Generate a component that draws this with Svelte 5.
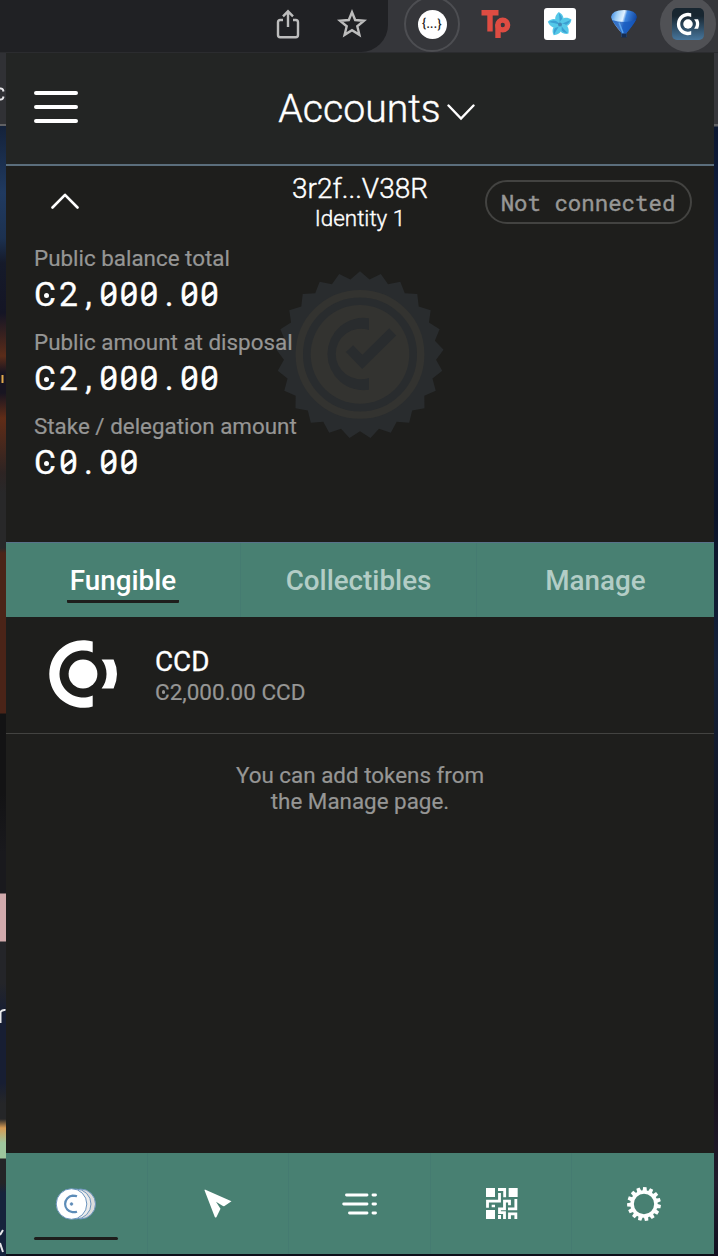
<script>
  const balances = [
    { label: 'Public balance total', value: '2,000.00' },
    { label: 'Public amount at disposal', value: '2,000.00' },
    { label: 'Stake / delegation amount', value: '0.00' },
  ];
  const tabs = ['Fungible', 'Collectibles', 'Manage'];
  const kind = (c) => (c === '0' ? 'digit zero' : 'digit');

  const star = (points, outer, inner) =>
    Array.from({ length: points * 2 }, (_, i) => {
      const a = (Math.PI * i) / points;
      const r = i % 2 ? inner : outer;
      return `${(r * Math.sin(a)).toFixed(2)},${(-r * Math.cos(a)).toFixed(2)}`;
    }).join(' ');
  const seal = star(25, 83.7, 76.2);
  const teeth = Array.from({ length: 15 }, (_, i) => i * 24 + 3);
  const petals = [0, 72, 144, 216, 288];
</script>

{#snippet mark()}
  <path d="M9.7-32.4A33.8 33.8 0 1 0 9.7 32.4V21.4A23.5 23.5 0 1 1 9.7-21.4Z" />
  <path d="M18.6-14.4H30.6A33.8 33.8 0 0 1 30.6 14.4H18.6A23.5 23.5 0 0 0 18.6-14.4Z" />
  <circle r="14.4" />
{/snippet}

<div class="screen">
  <div class="toolbar">
    <div class="omnibox">
      <svg width="26" height="32" viewBox="0 0 26 32" fill="none" stroke="#bdbdbd" stroke-width="2.4">
        <path d="M8 12H5.2Q3 12 3 14.2V27Q3 29.2 5.200 29.200H20.800Q23 29.200 23 27V14.200Q23 12 20.800 12H18M13 19V4M8 8.300L13 3.300L18 8.300" />
      </svg>
      <svg width="32" height="32" viewBox="0 0 32 32" fill="none" stroke="#bdbdbd" stroke-width="2.4">
        <path d="M16 4.200L19.200 12L28 12.700L21.300 18.300L23.400 26.800L16 22.200L8.600 26.800L10.700 18.300L4 12.700L12.800 12Z" />
      </svg>
    </div>
    <div class="extensions">
      <div class="ext ring"><span>{'{...}'}</span></div>
      <div class="ext">
        <svg width="32" height="32" viewBox="0 0 32 32" fill="none" stroke="#de4c42" stroke-width="5.4">
          <path d="M1.500 4.700H18.500M10 4.700V23.500M18 30V16.500" /><circle cx="22.700" cy="17" r="4.900" />
        </svg>
      </div>
      <div class="ext">
        <svg width="32" height="32" viewBox="0 0 32 32">
          <rect width="32" height="32" rx="3" fill="#fff" />
          <g transform="translate(16 16.500) rotate(-8)">
            {#each petals as angle}
              <path transform="rotate({angle})" d="M0 1C-6-3-5-9 .5-12.500C5.500-9 6-3 0 1Z" fill="#55c8e8" />
              <path transform="rotate({angle})" d="M0 0C0-3 .5-7 .5-11.500C3.500-8 4-4 0 0Z" fill="#3ba0d3" />
            {/each}
            <circle r="2" fill="#4389b8" />
          </g>
        </svg>
      </div>
      <div class="ext">
        <svg width="32" height="32" viewBox="0 0 32 32">
          <defs>
            <linearGradient id="balloon" x2="1" y2=".3"><stop stop-color="#2f7fe0" /><stop offset=".25" stop-color="#9accf5" /><stop offset=".5" stop-color="#e2f2ff" /><stop offset=".6" stop-color="#3f87e0" /><stop offset="1" stop-color="#0e429c" /></linearGradient>
          </defs>
          <path d="M3 9Q4 2 16 2Q28 2 29 9Q28 14 18.500 25V29H13.500V25Q4 14 3 9Z" fill="url(#balloon)" />
          <path d="M4 12Q16 16 28 12Q25 17 18.500 25H13.500Q7 17 4 12Z" fill="#1759bd" opacity=".8" />
          <path d="M11 14.500L15 25" stroke="#5aa5ee" stroke-width="1.500" />
          <path d="M13.500 25.500H18.500V29.500H13.500Z" fill="#152c50" />
        </svg>
      </div>
      <div class="ext active">
        <svg width="32" height="32" viewBox="0 0 32 32">
          <defs><linearGradient id="app-tile" x2="0" y2="1"><stop offset=".25" stop-color="#182630" /><stop offset="1" stop-color="#47769c" /></linearGradient></defs>
          <rect width="32" height="32" rx="5" fill="url(#app-tile)" />
          <g transform="translate(16 16) scale(.33)" fill="#fff">{@render mark()}</g>
        </svg>
      </div>
    </div>
  </div>

  <div class="content">
    <div class="backdrop left">
      <svg width="6" height="1203" viewBox="0 0 6 1203" fill="none" stroke="#e8e8ea" stroke-width="2">
        <path d="M0 35.500Q3 35 3.500 38.500M0 46.500Q3 47 3.500 43.500M.5 970V959Q2 956.500 5.500 957M0 1182L3 1177M0 1190L3 1199" />
        <path d="M2.500 322V330" stroke="#e0a94c" />
      </svg>
    </div>
    <main class="popup">
      <header>
        <svg class="menu" width="44" height="34" viewBox="0 0 44 34" stroke="#fff" stroke-width="4" stroke-linecap="round"><path d="M2 3H42M2 17H42M2 31H42" /></svg>
        <h1>Accounts
          <svg width="28" height="17" viewBox="0 0 28 17" fill="none" stroke="#fff" stroke-width="2.400" stroke-linecap="round"><path d="M1.500 1.500L14 14.500L26.500 1.500" /></svg>
        </h1>
      </header>

      <section class="account">
        <svg class="seal" width="168" height="168" viewBox="-84 -84 168 168">
          <polygon points={seal} fill="#292c2e" />
          <g transform="translate(0 -.6)">
            <circle r="60.700" fill="none" stroke="#333330" stroke-width="7.400" />
            <circle r="49.300" fill="#333330" />
            <path d="M9-36.200A36.200 36.200 0 1 0 9 35.400V23.600A25.300 25.300 0 1 1 9-24.400Z" fill="#292c2e" />
            <path d="M-10.500-5.800L2.300 7.500L32.700-22.500" fill="none" stroke="#292c2e" stroke-width="10" stroke-linejoin="miter" />
          </g>
        </svg>
        <div class="summary">
          <svg class="collapse" width="28" height="18" viewBox="0 0 28 18" fill="none" stroke="#fff" stroke-width="2.600" stroke-linecap="round" stroke-linejoin="round"><path d="M1.500 15.500L14 2.800L26.500 15.500" /></svg>
          <div class="identity">
            <div class="address">3r2f...V38R</div>
            <div class="name">Identity 1</div>
          </div>
          <div class="status">Not connected</div>
        </div>
        <div class="balances">
          {#each balances as b}
            <div class="label">{b.label}</div>
            <div class="amount"><span class="ccd">C</span>{#each b.value as c}<span class={kind(c)}>{c}</span>{/each}</div>
          {/each}
        </div>
      </section>

      <nav class="tabs">
        {#each tabs as tab, i}
          <div class="tab" class:selected={i === 0}><span>{tab}</span></div>
        {/each}
      </nav>

      <div class="token">
        <svg width="70" height="70" viewBox="-35 -35 70 70" fill="#fff">{@render mark()}</svg>
        <div class="token-text">
          <div class="symbol">CCD</div>
          <div class="holding"><span class="ccd">C</span>2,000.00 CCD</div>
        </div>
      </div>
      <p>You can add tokens from<br />the Manage page.</p>

      <footer>
        <div class="item current">
          <svg width="42" height="32" viewBox="0 0 42 32" stroke="#6b94bd" stroke-width="1">
            <circle cx="25.500" cy="16" r="15" fill="#dcdcdc" /><circle cx="21" cy="16" r="15" fill="#ededed" /><circle cx="16.500" cy="16" r="15.300" fill="#fff" />
            <path d="M22 8.200Q20.500 7.700 17.500 7.700A8.300 8.300 0 0 0 17.500 24.200Q20.500 24.200 22 23.700" fill="none" stroke="#5c8cb8" stroke-width="2.200" />
            <circle cx="16.500" cy="16" r="1.300" fill="#5c8cb8" />
          </svg>
        </div>
        <div class="item">
          <svg width="28" height="30" viewBox="0 0 28 30"><path d="M.5 1.200Q.6.4 1.400.7L27.500 12.200L20.500 17Q19.500 17.500 18.500 16.800L12 12.800L16.500 19.800L12.500 28Q11.600 29.200 10.800 28Z" fill="#fff" /></svg>
        </div>
        <div class="item">
          <svg width="36" height="24" viewBox="0 0 36 24" stroke="#fff" stroke-width="2.900" stroke-linecap="round"><path d="M4.500 3H25M31 3H33.500M1.700 12H25M31 12H33.500M7.500 21H25M31 21H33.500" /></svg>
        </div>
        <div class="item">
          <svg width="32" height="31" viewBox="0 0 96 93">
            <path d="M0 0H27V27H0ZM68 0H95V27H68ZM0 66H27V93H0ZM17 50H27V58H17ZM36 81H45V93H36Z" fill="#fff" />
            <path d="M36 4.500H56V28M40.500 15V39.500H4.500V59M70.500 52V39.500H55.500V62.500H40.500V74H55.500V93M89.500 33V62.500H66M70.500 93V77.500H89.500V93" fill="none" stroke="#fff" stroke-width="8.500" />
          </svg>
        </div>
        <div class="item">
          <svg width="34" height="34" viewBox="-17 -17 34 34">
            <circle r="11.900" fill="none" stroke="#fff" stroke-width="3.500" />
            {#each teeth as t}<path transform="rotate({t})" d="M-2.200-12.500L-1.700-16.900H1.700L2.200-12.500Z" fill="#fff" />{/each}
          </svg>
        </div>
      </footer>
    </main>
    <div class="backdrop right"></div>
  </div>
</div>

<style>
  :global(body) { background: #0d0f18; }
  .screen { width: 718px; height: 1256px; display: flex; flex-direction: column; overflow: hidden; font-family: Roboto, sans-serif; color: #fff; }
  svg { display: block; flex: none; }
  .toolbar { height: 53px; box-sizing: border-box; background: #35363a; display: flex; border-bottom: 1px solid #2b2c2f; flex: none; }
  .omnibox { width: 388px; height: 52px; box-sizing: border-box; background: #202124; border-radius: 0 0 27px 0; display: flex; justify-content: flex-end; gap: 35px; padding: 8px 20px 0 0; }
  .extensions { display: flex; padding-left: 16px; gap: 8px; margin-top: -4px; }
  .ext { width: 56px; height: 56px; box-sizing: border-box; border-radius: 50%; display: flex; align-items: center; justify-content: center; flex: none; }
  .ring { border: 2px solid #4d4e52; }
  .ring span { width: 29px; height: 29px; border-radius: 50%; background: #fff; color: #222; font: 500 12px/28px Roboto, sans-serif; letter-spacing: .4px; text-align: center; }
  .active { background: #505155; }
  .content { display: flex; flex: 1; }
  .backdrop.left { width: 6px; background: linear-gradient(#303135 0 71px, #606164 71px 73px, #14223a 73px, #203a60 140px, #1c3150 185px, #151a2a 210px, #141525 260px, #5b2c19 303px, #181521 320px, #181521 340px, #602c17 365px, #2d2423 420px, #282829 440px 495px, #4b2418 500px 660px, #131314 661px 740px, #19191d 800px 840px, #d1aaac 841px 888px, #242529 889px 930px, #171e33 960px 1030px, #252628 1050px 1066px, #d69b54 1075px, #9ec69d 1090px 1105px, #242427 1106px 1130px, #16233c 1140px); }
  .backdrop.right { width: 4px; background: linear-gradient(#36373b 0 71px, #606164 71px 73px, #0c1832 74px, #142347 240px, #0b1429 460px, #15223a 610px, #111624 760px, #091c30 930px, #17121d 1040px, #211c2d 1130px, #111020); }
  .popup { width: 708px; height: 1201px; background: #1e1e1c; display: flex; flex-direction: column; }
  header { height: 113px; box-sizing: border-box; background: #232524; border-bottom: 2px solid #5b6e7c; display: grid; grid-template-columns: 104px 1fr 104px; align-items: center; padding-left: 28px; flex: none; }
  .menu { margin-top: -4px; }
  h1 { margin: 0; font-size: 39.200px; line-height: 50px; font-weight: 300; display: flex; justify-content: center; align-items: center; gap: 6px; padding-left: 5px; white-space: nowrap; -webkit-text-stroke: .4px; }
  h1 svg { margin-top: 8px; }
  .account { position: relative; height: 376px; flex: none; }
  .seal { position: absolute; left: 270px; top: 105px; }
  .summary { position: relative; display: grid; grid-template-columns: 1fr 160px 1fr; height: 76px; }
  .collapse { margin: 26px 0 0 45px; }
  .identity { text-align: center; font-weight: 300; padding-top: 6px; -webkit-text-stroke: .4px; }
  .address { font-size: 28px; line-height: 33px; }
  .name { font-size: 22.400px; line-height: 26px; }
  .status { justify-self: end; box-sizing: border-box; width: 207px; height: 44px; margin: 14px 22px 0 0; border: 2px solid #434341; border-radius: 22px; color: #979796; text-align: center; font: 22.400px/42px "Roboto Mono", "Liberation Mono", monospace; text-indent: -1px; -webkit-text-stroke: .4px; }
  .balances { position: relative; padding-left: 28px; }
  .label { font-size: 22.400px; line-height: 32px; color: #969695; -webkit-text-stroke: .2px; }
  .amount { display: flex; align-items: flex-start; box-sizing: border-box; padding-top: 1px; font-size: 33.600px; line-height: 40px; height: 52px; -webkit-text-stroke: .3px; }
  .digit { width: 20.160px; text-align: center; position: relative; }
  .zero::after { content: ""; position: absolute; left: 4px; right: 4px; top: 19px; height: 2.600px; background: #fff; transform: rotate(-38deg); }
  .ccd { position: relative; }
  .amount .ccd { width: 24.300px; }
  .ccd::after { content: ""; position: absolute; width: .16em; height: .16em; border-radius: 50%; background: currentColor; left: .29em; top: 50%; margin-top: -.07em; }
  .tabs { height: 75px; box-sizing: border-box; border-top: 1px solid #58728a; background: #488072; display: grid; grid-template-columns: 235px 236px 237px; flex: none; }
  .tab { display: flex; justify-content: center; font-size: 27.800px; font-weight: 500; color: #b3cdc6; border-right: 1px solid #457b71; padding-top: 18px; }
  .tab:last-child, .item:last-child { border: 0; }
  .tab span { height: 39px; line-height: 39px; padding: 0 3px; border-bottom: 3px solid transparent; }
  .tab.selected { color: #fff; }
  .selected span { border-color: #1e1e1c; border-radius: 1px; }
  .token { height: 117px; box-sizing: border-box; border-bottom: 1px solid #434341; display: flex; align-items: center; gap: 37px; padding: 0 0 3px 42px; flex: none; }
  .token-text { padding-top: 5px; }
  .symbol { font-size: 27.800px; line-height: 33px; -webkit-text-stroke: .3px; }
  .holding { font-size: 22.500px; line-height: 29px; color: #969695; -webkit-text-stroke: .2px; }
  p { margin: 28px 0 0; text-align: center; font-size: 22.400px; line-height: 26px; color: #969695; -webkit-text-stroke: .2px; }
  footer { margin-top: auto; height: 101px; background: #488072; display: grid; grid-template-columns: repeat(5, 1fr); flex: none; }
  .item { display: flex; align-items: center; justify-content: center; border-right: 1px solid #457b71; position: relative; }
  .item:not(.current) { padding-left: 1px; }
  .current::after { content: ""; position: absolute; left: 28px; right: 29px; bottom: 14px; height: 3px; border-radius: 2px; background: #1e1e1c; }
</style>
